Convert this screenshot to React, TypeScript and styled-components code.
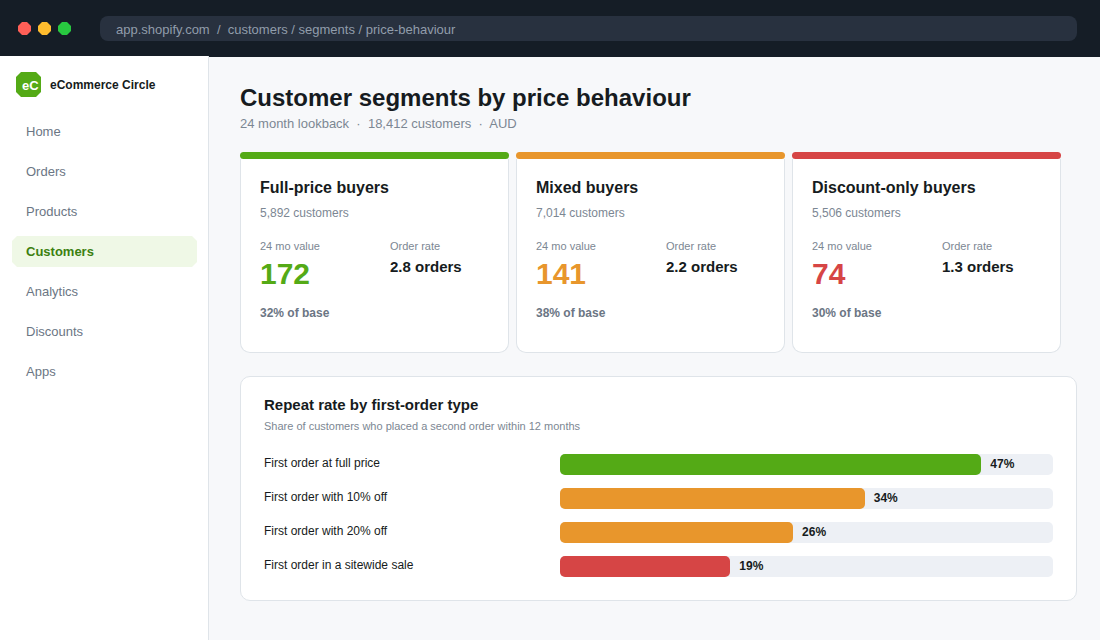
import React from "react";
import styled, { createGlobalStyle } from "styled-components";

const color = {
  ink: "#161b20",
  bar: "#151d26",
  field: "#28313f",
  fieldText: "#919dab",
  page: "#f7f8fa",
  line: "#dfe4e9",
  muted: "#7c8793",
  nav: "#6b7684",
  green: "#54aa16",
  greenDark: "#3c8010",
  greenSoft: "#eff8e6",
  orange: "#e8962c",
  red: "#d64545",
  track: "#edf0f5",
};

const GlobalStyle = createGlobalStyle`
  *, *::before, *::after { box-sizing: border-box; }
  html, body, #root { min-height: 100vh; }
  body {
    margin: 0;
    background: ${color.page};
    color: ${color.ink};
    font-family: "Liberation Sans", Arial, sans-serif;
  }
  h1, h2, p, dl, dt, dd, ul { margin: 0; padding: 0; }
`;

const Page = styled.div`
  display: flex;
  flex-direction: column;
  min-height: 100vh;
`;

const TopBar = styled.header`
  display: flex;
  align-items: flex-start;
  gap: 29px;
  height: 56px;
  padding: 16px 23px 0 18px;
  background: ${color.bar};
`;

const Dots = styled.div`
  display: flex;
  gap: 7px;
  padding-top: 6px;
`;

const Dot = styled.span<{ $fill: string }>`
  width: 13px;
  height: 13px;
  background: ${(p) => p.$fill};
  clip-path: polygon(4px 0, 9px 0, 13px 4px, 13px 9px, 9px 13px, 4px 13px, 0 9px, 0 4px);
`;

const Address = styled.input`
  flex: 1;
  min-width: 0;
  height: 25px;
  padding: 2px 16px 0;
  border: 0;
  border-radius: 8px;
  outline: 0;
  background: ${color.field};
  color: ${color.fieldText};
  font: 13px "Liberation Sans", Arial, sans-serif;
`;

const Body = styled.div`
  display: flex;
  flex: 1;
`;

const Sidebar = styled.aside`
  flex: none;
  width: 209px;
  padding: 16px 11px 16px 12px;
  border-right: 1px solid ${color.line};
  background: #fff;
`;

const Brand = styled.div`
  display: flex;
  align-items: center;
  gap: 9px;
  padding-left: 4px;
  font-size: 12px;
  font-weight: 700;
  line-height: 16px;
`;

const Logo = styled.span`
  width: 25px;
  height: 25px;
  padding-left: 6px;
  background: ${color.green};
  clip-path: polygon(5px 0, 20px 0, 25px 5px, 25px 20px, 20px 25px, 5px 25px, 0 20px, 0 5px);
  color: #fff;
  font-size: 13px;
  line-height: 27px;
`;

const Nav = styled.nav`
  display: flex;
  flex-direction: column;
  gap: 9px;
  margin-top: 19px;
`;

const NavLink = styled.a<{ $active: boolean }>`
  padding-left: 14px;
  background: ${(p) => (p.$active ? color.greenSoft : "transparent")};
  clip-path: polygon(
    5px 0, calc(100% - 5px) 0, 100% 5px, 100% calc(100% - 5px),
    calc(100% - 5px) 100%, 5px 100%, 0 calc(100% - 5px), 0 5px
  );
  color: ${(p) => (p.$active ? color.greenDark : color.nav)};
  font-size: 13px;
  font-weight: ${(p) => (p.$active ? 700 : 400)};
  line-height: 31px;
  text-decoration: none;
`;

const Main = styled.main`
  flex: 1;
  min-width: 0;
  padding: 27px 23px 39px 31px;
  border-top: 1px solid ${color.bar};
`;

const Title = styled.h1`
  font-size: 24px;
  line-height: 28px;
`;

const Subtitle = styled.p`
  margin-top: 4px;
  color: ${color.muted};
  font-size: 13px;
  line-height: 16px;
  white-space: pre-wrap;
`;

const Cards = styled.div`
  display: grid;
  grid-template-columns: repeat(3, 1fr);
  gap: 7px;
  margin-top: 20px;
  padding-right: 16px;
`;

const Card = styled.section`
  display: flex;
  flex-direction: column;
`;

const Strip = styled.div<{ $fill: string }>`
  height: 7px;
  border-radius: 4px;
  background: ${(p) => p.$fill};
`;

const CardBody = styled.div`
  flex: 1;
  padding: 19px 19px 31px;
  border: 1px solid ${color.line};
  border-top: 0;
  border-radius: 0 0 10px 10px;
  background: #fff;
`;

const CardTitle = styled.h2`
  font-size: 16px;
  line-height: 20px;
`;

const CardCount = styled.p`
  margin-top: 7px;
  color: ${color.muted};
  font-size: 12px;
  line-height: 16px;
`;

const Metrics = styled.dl`
  display: grid;
  grid-template-columns: 130px 1fr;
  margin-top: 18px;
`;

const MetricLabel = styled.dt`
  margin-bottom: 4px;
  color: ${color.muted};
  font-size: 11px;
  line-height: 14px;
`;

const BigValue = styled.dd<{ $color: string }>`
  color: ${(p) => p.$color};
  font-size: 30px;
  font-weight: 700;
  line-height: 34px;
`;

const SmallValue = styled.dd`
  font-size: 15px;
  font-weight: 700;
  line-height: 20px;
`;

const Share = styled.p`
  margin-top: 14px;
  color: ${color.nav};
  font-size: 12px;
  font-weight: 700;
  line-height: 16px;
`;

const Panel = styled.section`
  margin-top: 23px;
  padding: 18px 23px 23px;
  border: 1px solid ${color.line};
  border-radius: 10px;
  background: #fff;
`;

const PanelTitle = styled.h2`
  font-size: 15px;
  line-height: 20px;
`;

const PanelNote = styled.p`
  margin-top: 4px;
  color: ${color.muted};
  font-size: 11px;
  line-height: 14px;
`;

const Rows = styled.ul`
  display: flex;
  flex-direction: column;
  gap: 13px;
  margin-top: 21px;
  list-style: none;
`;

const Row = styled.li`
  display: grid;
  grid-template-columns: 296px 1fr;
`;

const RowLabel = styled.span`
  font-size: 12px;
  line-height: 18px;
`;

const Track = styled.div`
  display: flex;
  gap: 9px;
  height: 21px;
  border-radius: 5px;
  background: ${color.track};
`;

const Fill = styled.div<{ $fill: string }>`
  flex: none;
  border-radius: 5px;
  background: ${(p) => p.$fill};
`;

const Percent = styled.span`
  font-size: 12px;
  font-weight: 700;
  line-height: 20px;
`;

const navItems = ["Home", "Orders", "Products", "Customers", "Analytics", "Discounts", "Apps"];

const segments = [
  { name: "Full-price buyers", count: "5,892", value: 172, rate: "2.8", share: 32, fill: color.green },
  { name: "Mixed buyers", count: "7,014", value: 141, rate: "2.2", share: 38, fill: color.orange },
  { name: "Discount-only buyers", count: "5,506", value: 74, rate: "1.3", share: 30, fill: color.red },
];

const SCALE_MAX = 55;

const repeatRates = [
  { label: "First order at full price", rate: 47, fill: color.green },
  { label: "First order with 10% off", rate: 34, fill: color.orange },
  { label: "First order with 20% off", rate: 26, fill: color.orange },
  { label: "First order in a sitewide sale", rate: 19, fill: color.red },
];

export default function App() {
  return (
    <>
      <GlobalStyle />
      <Page>
        <TopBar>
          <Dots>
            <Dot $fill="#ff5f57" />
            <Dot $fill="#febc2e" />
            <Dot $fill="#28c840" />
          </Dots>
          <Address
            type="text"
            readOnly
            aria-label="Address"
            value={"app.shopify.com  /  customers / segments / price-behaviour"}
          />
        </TopBar>
        <Body>
          <Sidebar>
            <Brand>
              <Logo>eC</Logo>
              <span>eCommerce Circle</span>
            </Brand>
            <Nav>
              {navItems.map((item) => (
                <NavLink
                  key={item}
                  href={`#${item.toLowerCase()}`}
                  $active={item === "Customers"}
                  aria-current={item === "Customers" ? "page" : undefined}
                >
                  {item}
                </NavLink>
              ))}
            </Nav>
          </Sidebar>
          <Main>
            <Title>Customer segments by price behaviour</Title>
            <Subtitle>{"24 month lookback  ·  18,412 customers  ·  AUD"}</Subtitle>
            <Cards>
              {segments.map((s) => (
                <Card key={s.name}>
                  <Strip $fill={s.fill} />
                  <CardBody>
                    <CardTitle>{s.name}</CardTitle>
                    <CardCount>{`${s.count} customers`}</CardCount>
                    <Metrics>
                      <div>
                        <MetricLabel>24 mo value</MetricLabel>
                        <BigValue $color={s.fill}>{s.value}</BigValue>
                      </div>
                      <div>
                        <MetricLabel>Order rate</MetricLabel>
                        <SmallValue>{`${s.rate} orders`}</SmallValue>
                      </div>
                    </Metrics>
                    <Share>{`${s.share}% of base`}</Share>
                  </CardBody>
                </Card>
              ))}
            </Cards>
            <Panel>
              <PanelTitle>Repeat rate by first-order type</PanelTitle>
              <PanelNote>Share of customers who placed a second order within 12 months</PanelNote>
              <Rows>
                {repeatRates.map((r) => (
                  <Row key={r.label}>
                    <RowLabel>{r.label}</RowLabel>
                    <Track>
                      <Fill $fill={r.fill} style={{ width: `${(r.rate / SCALE_MAX) * 100}%` }} />
                      <Percent>{`${r.rate}%`}</Percent>
                    </Track>
                  </Row>
                ))}
              </Rows>
            </Panel>
          </Main>
        </Body>
      </Page>
    </>
  );
}
